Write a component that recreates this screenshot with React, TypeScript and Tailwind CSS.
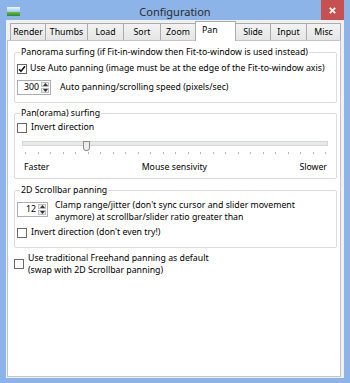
import React from 'react';

const tabs = [
  { name: 'Render', w: 'w-[36px]' },
  { name: 'Thumbs', w: 'w-[43px]' },
  { name: 'Load', w: 'w-[37px]' },
  { name: 'Sort', w: 'w-[38px]' },
  { name: 'Zoom', w: 'w-[36px]' },
  { name: 'Pan', w: 'w-[41px]', active: true },
  { name: 'Slide', w: 'w-[36px]' },
  { name: 'Input', w: 'w-[37px]' },
  { name: 'Misc', w: 'w-[35px]' },
];

function Check({ checked = false }: { checked?: boolean }) {
  return (
    <div className="w-[10px] h-[10px] shrink-0 border border-[#6a6a6a] bg-white flex items-center justify-center">
      {checked && (
        <svg width="8" height="8" viewBox="0 0 8 8">
          <path d="M1 4.2 L3 6.3 L7 1.3" fill="none" stroke="#1a1a1a" strokeWidth="1.6" />
        </svg>
      )}
    </div>
  );
}

function Spin({ value, className }: { value: string; className: string }) {
  return (
    <div className={`${className} h-[15px] shrink-0 flex bg-white border border-[#abadb3]`}>
      <div className="flex-1 text-right pr-[2px] leading-[13px]">{value}</div>
      <div className="w-[9px] flex flex-col gap-px py-px pr-px">
        <div className="flex-1 bg-[#ececec] border border-[#bdbdbd] flex items-center justify-center">
          <svg width="5" height="3" viewBox="0 0 5 3">
            <path d="M0 3 L2.5 0 L5 3Z" fill="#333" />
          </svg>
        </div>
        <div className="flex-1 bg-[#ececec] border border-[#bdbdbd] flex items-center justify-center">
          <svg width="5" height="3" viewBox="0 0 5 3">
            <path d="M0 0 L2.5 3 L5 0Z" fill="#333" />
          </svg>
        </div>
      </div>
    </div>
  );
}

function Group({ title, className, children }: { title: string; className: string; children: React.ReactNode }) {
  return (
    <fieldset className={`border border-[#dcdcdc] rounded-[2px] px-[2px] ml-[6px] mr-[3px] ${className}`}>
      <legend className="ml-[3px] px-[1px] leading-[12px]">{title}</legend>
      {children}
    </fieldset>
  );
}

export default function App() {
  return (
    <div className="w-[350px] h-[383px] bg-[#8db4e8] flex flex-col overflow-hidden text-black text-[8.75px] font-['Noto_Sans',sans-serif]">
      {/* title bar */}
      <div className="h-[20px] shrink-0 flex">
        <div className="w-[29px] pl-[7px] pt-[7px]">
          <div className="w-[13px] h-[9px] flex flex-col">
            <div className="h-[5px] bg-linear-to-b from-[#eef6fe] to-[#9cc8ef]" />
            <div className="h-[4px] bg-linear-to-b from-[#62c040] to-[#2e8a26]" />
          </div>
        </div>
        <div className="flex-1 text-center text-[11px] leading-[14px] pt-[5px] text-[#2b2b2b]">Configuration</div>
        <div className="w-[29px] pr-[6px]">
          <div className="h-[20px] bg-[#c75050] flex items-center justify-center">
            <svg width="7" height="7" viewBox="0 0 7 7">
              <path d="M0.8 0.8 L6.2 6.2 M6.2 0.8 L0.8 6.2" stroke="#fff" strokeWidth="1.7" />
            </svg>
          </div>
        </div>
      </div>

      {/* client */}
      <div className="flex-1 mx-[6px] mb-[5px] bg-[#f0f0f0] flex flex-col">
        <div className="h-[20px] shrink-0 flex items-end pl-[4px]">
          {tabs.map((t, i) =>
            t.active ? (
              <div
                key={t.name}
                className={`${t.w} h-[20px] -mb-px -ml-px relative z-10 bg-white border border-b-0 border-[#acacac] flex items-center pl-[6px] pb-[1px]`}
              >
                {t.name}
              </div>
            ) : (
              <div
                key={t.name}
                className={`${t.w} h-[17px] ${i === 0 ? '' : '-ml-px'} bg-linear-to-b from-[#f3f3f3] to-[#e5e5e5] border border-b-0 border-[#acacac] flex items-center justify-center pt-[2px]`}
              >
                {t.name}
              </div>
            )
          )}
        </div>

        <div className="flex-1 ml-[1px] mr-[3px] mb-[1px] bg-white border border-[#c5c5c5] flex flex-col">
          <Group title="Panorama surfing (if Fit-in-window then Fit-to-window is used instead)" className="mt-[5px] pb-[7px]">
            <div className="mt-[4px] h-[14px] flex items-center gap-[3px]">
              <Check checked />
              <span>Use Auto panning (image must be at the edge of the Fit-to-window axis)</span>
            </div>
            <div className="mt-[4px] flex items-center gap-[9px]">
              <Spin value="300" className="w-[34px]" />
              <span>Auto panning/scrolling speed (pixels/sec)</span>
            </div>
          </Group>

          <Group title="Pan(orama) surfing" className="mt-[4px] pb-[5px]">
            <div className="mt-[2px] h-[14px] flex items-center gap-[4px]">
              <Check />
              <span>Invert direction</span>
            </div>
            <div className="mt-[6px] ml-[5px] mr-[6px] h-[9px] relative">
              <div className="mt-[1px] h-[5px] bg-[#e7eaea] border border-[#d6d6d6]" />
              <div className="absolute left-[61px] top-0 w-[7px] h-[10px] bg-[#ececec] border border-[#8a8a8a] rounded-b-[3px]" />
            </div>
            <div className="mt-[2px] ml-[8px] mr-[8px] h-[2px] flex justify-between">
              {Array.from({ length: 25 }).map((_, i) => (
                <div key={i} className="w-[1px] h-[2px] bg-[#b5b5b5]" />
              ))}
            </div>
            <div className="mt-[7px] mx-[7px] h-[12px] leading-[12px] flex justify-between">
              <span>Faster</span>
              <span>Mouse sensivity</span>
              <span>Slower</span>
            </div>
          </Group>

          <Group title="2D Scrollbar panning" className="mt-[5px] pb-[7px]">
            <div className="mt-[3px] flex items-start gap-[7px]">
              <Spin value="12" className="w-[31px] mt-[3px]" />
              <div className="leading-[12px]">
                Clamp range/jitter (don't sync cursor and slider movement
                <br />
                anymore) at scrollbar/slider ratio greater than
              </div>
            </div>
            <div className="mt-[3px] h-[14px] flex items-center gap-[4px]">
              <Check />
              <span>Invert direction (don't even try!)</span>
            </div>
          </Group>

          <div className="mt-[4px] ml-[6px] flex items-center gap-[4px]">
            <Check />
            <div className="leading-[12px]">
              Use traditional Freehand panning as default
              <br />
              (swap with 2D Scrollbar panning)
            </div>
          </div>
        </div>
      </div>
    </div>
  );
}
